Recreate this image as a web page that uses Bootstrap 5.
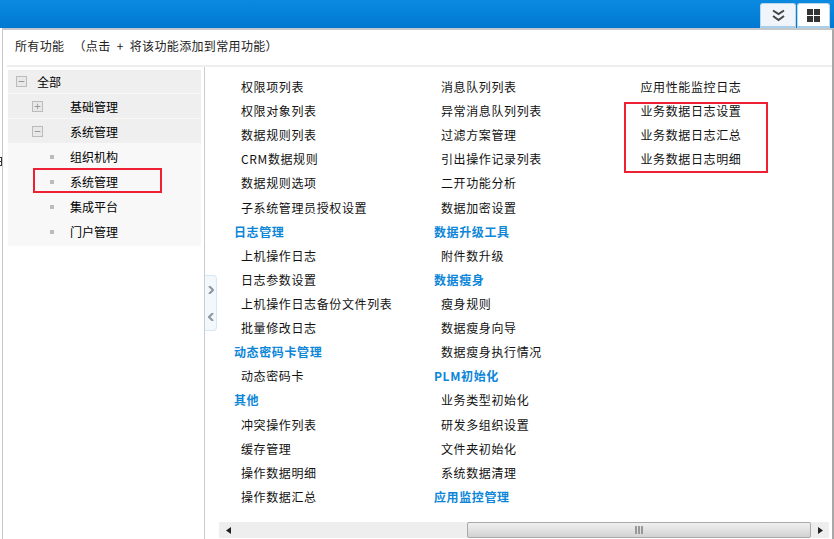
<!DOCTYPE html>
<html lang="zh"><head><meta charset="utf-8">
<link href="https://cdn.jsdelivr.net/npm/bootstrap@5.3.0/dist/css/bootstrap.min.css" rel="stylesheet">
<style>
html,body{height:539px;overflow:hidden;background:#fff}
body{font:12px/24px "Noto Sans CJK SC","Liberation Sans",sans-serif;color:#000;position:relative}
.topbar{height:28px;background:linear-gradient(#0a8ae0,#0078d2)}
.tabbtn{width:36px;height:25px;margin-top:3px;background:#eff5fb;border:1px solid #bcd6ea;border-bottom:2px solid #a9cfe9;border-radius:3px 3px 0 0}
.tabbtn.w{width:33px;background:#fff;margin-right:4px;margin-left:1px}
.shell{height:511px;border-top:2px solid #c4c8cc;border-left:1px solid #c8c8c8;border-right:2px solid #a8a8a8;margin-left:2px;margin-right:0;padding:0}
.headline{height:37px;line-height:31px;letter-spacing:.35px;color:#222;border-bottom:2px solid #eee;margin-left:4px;padding-left:8px}
.mainrow{height:472px}
.side{width:202px;flex:none;padding:3px 0 0 5px;border-right:1px solid #ccc}
.tree{width:193px;background:#f8f8f8;padding-bottom:2px}
.tnode{height:25px;line-height:25px;display:flex;align-items:center}
.tnode.l1{background:#efefef;margin-bottom:1px;height:24px}
.tnode.l0{background:#efefef;margin-bottom:1px;height:23px}
.l0 .ico{margin-left:8px;margin-right:10px}
.l1 .ico{margin-left:24px;margin-right:27px}
.ico{width:11px;height:11px;border:1px solid #bbb;background:#e8e8e8;flex:none;display:block}
.dot{width:4px;height:4px;background:#bbb;margin-left:42px;margin-right:16px;flex:none}
.splitwrap{width:13px;flex:none;display:flex;align-items:flex-start;padding-top:208px}
.splith{width:12px;height:56px;background:#f3f8fd;border:1px solid #d5e7f6;border-left:0;border-radius:0 4px 4px 0}
.content{flex:1;min-width:0;display:flex;flex-direction:column}
.cols{height:455px;padding:8px 0 0 16px;display:flex}
.colm{width:200px;flex:none}
.colm.mid{width:199.5px}
.it{height:24.12px;line-height:24px;padding-left:7px;letter-spacing:.62px;white-space:nowrap;color:#111}
.hd{height:24.12px;line-height:24px;font-weight:700;color:#0c86d8;letter-spacing:.62px;white-space:nowrap}
.sbar{height:16px;margin:0 3px 0 1px;background:#eee;display:flex;align-items:center}
.sbtn{width:18px;flex:none;display:flex;justify-content:center}
.sgap{width:230px;flex:none}
.thumb{flex:1;height:16px;background:linear-gradient(#f0f0f0,#d2d2d2);border:1px solid #a9a9a9;border-radius:2px;display:flex;justify-content:center;align-items:center}
.redbox{position:absolute;border:2px solid #ee2033}
.edgeglyph{position:absolute;left:0;top:157px}
</style></head><body>
<div class="topbar d-flex justify-content-end">
  <div class="tabbtn d-flex align-items-center justify-content-center">
    <svg width="13" height="13" viewBox="0 0 13 13"><path d="M1 1.5 6.5 5 12 1.5M1 7 6.5 11 12 7" fill="none" stroke="#444" stroke-width="2"/></svg>
  </div>
  <div class="tabbtn w d-flex align-items-center justify-content-center">
    <svg width="13" height="13" viewBox="0 0 13 13"><path fill="#333" d="M0 0h6v6H0zM7 0h6v6H7zM0 7h6v6H0zM7 7h6v6H7z"/></svg>
  </div>
</div>
<div class="shell">
  <div class="headline">所有功能&nbsp;&nbsp;&nbsp;（点击&nbsp;&nbsp;+&nbsp;&nbsp;将该功能添加到常用功能）</div>
  <div class="mainrow d-flex">
    <div class="side">
      <div class="tree">
        <div class="tnode l0"><svg class="ico" viewBox="0 0 11 11"><path d="M2 5h7v1H2z" fill="#888"/></svg>全部</div>
        <div class="tnode l1"><svg class="ico" viewBox="0 0 11 11"><path d="M2 5h7v1H2zM5 2h1v7H5z" fill="#999"/></svg>基础管理</div>
        <div class="tnode l1"><svg class="ico" viewBox="0 0 11 11"><path d="M2 5h7v1H2z" fill="#888"/></svg>系统管理</div>
        <div class="tnode"><span class="dot"></span>组织机构</div>
        <div class="tnode"><span class="dot"></span>系统管理</div>
        <div class="tnode"><span class="dot"></span>集成平台</div>
        <div class="tnode"><span class="dot"></span>门户管理</div>
      </div>
    </div>
    <div class="splitwrap"><div class="splith d-flex flex-column align-items-center justify-content-around">
      <svg width="6" height="8" viewBox="0 0 6 8"><path d="M1 0 5 4 1 8" fill="none" stroke="#8a96a0" stroke-width="2"/></svg>
      <svg width="6" height="8" viewBox="0 0 6 8"><path d="M5 0 1 4 5 8" fill="none" stroke="#8a96a0" stroke-width="2"/></svg>
    </div></div>
    <div class="content">
      <div class="cols">
        <div class="colm">
          <div class="it">权限项列表</div><div class="it">权限对象列表</div><div class="it">数据规则列表</div><div class="it">CRM数据规则</div><div class="it">数据规则选项</div><div class="it">子系统管理员授权设置</div>
          <div class="hd">日志管理</div><div class="it">上机操作日志</div><div class="it">日志参数设置</div><div class="it">上机操作日志备份文件列表</div><div class="it">批量修改日志</div>
          <div class="hd">动态密码卡管理</div><div class="it">动态密码卡</div>
          <div class="hd">其他</div><div class="it">冲突操作列表</div><div class="it">缓存管理</div><div class="it">操作数据明细</div><div class="it">操作数据汇总</div>
        </div>
        <div class="colm mid">
          <div class="it">消息队列列表</div><div class="it">异常消息队列列表</div><div class="it">过滤方案管理</div><div class="it">引出操作记录列表</div><div class="it">二开功能分析</div><div class="it">数据加密设置</div>
          <div class="hd">数据升级工具</div><div class="it">附件数升级</div>
          <div class="hd">数据瘦身</div><div class="it">瘦身规则</div><div class="it">数据瘦身向导</div><div class="it">数据瘦身执行情况</div>
          <div class="hd">PLM初始化</div><div class="it">业务类型初始化</div><div class="it">研发多组织设置</div><div class="it">文件夹初始化</div><div class="it">系统数据清理</div>
          <div class="hd">应用监控管理</div>
        </div>
        <div class="colm">
          <div class="it">应用性能监控日志</div><div class="it">业务数据日志设置</div><div class="it">业务数据日志汇总</div><div class="it">业务数据日志明细</div>
        </div>
      </div>
      <div class="sbar">
        <div class="sbtn"><svg width="5" height="7" viewBox="0 0 5 7"><path d="M5 0v7L0 3.5z" fill="#222"/></svg></div>
        <div class="sgap"></div>
        <div class="thumb"><svg width="8" height="8" viewBox="0 0 8 8"><path d="M0 0h2v8H0zM3 0h2v8H3zM6 0h2v8H6z" fill="#999"/></svg></div>
        <div class="sbtn"><svg width="5" height="7" viewBox="0 0 5 7"><path d="M0 0v7l5-3.5z" fill="#222"/></svg></div>
      </div>
    </div>
  </div>
</div>
<div class="redbox" style="left:33px;top:168px;width:129px;height:25px"></div>
<div class="redbox" style="left:624px;top:102px;width:144px;height:71px"></div>
<svg class="edgeglyph" width="2" height="9" viewBox="0 0 2 9"><path fill="#333" d="M0 0h2v1H0zM1 1h1v7H1zM0 4h2v1H0zM0 8h2v1H0z"/></svg>
</body></html>
